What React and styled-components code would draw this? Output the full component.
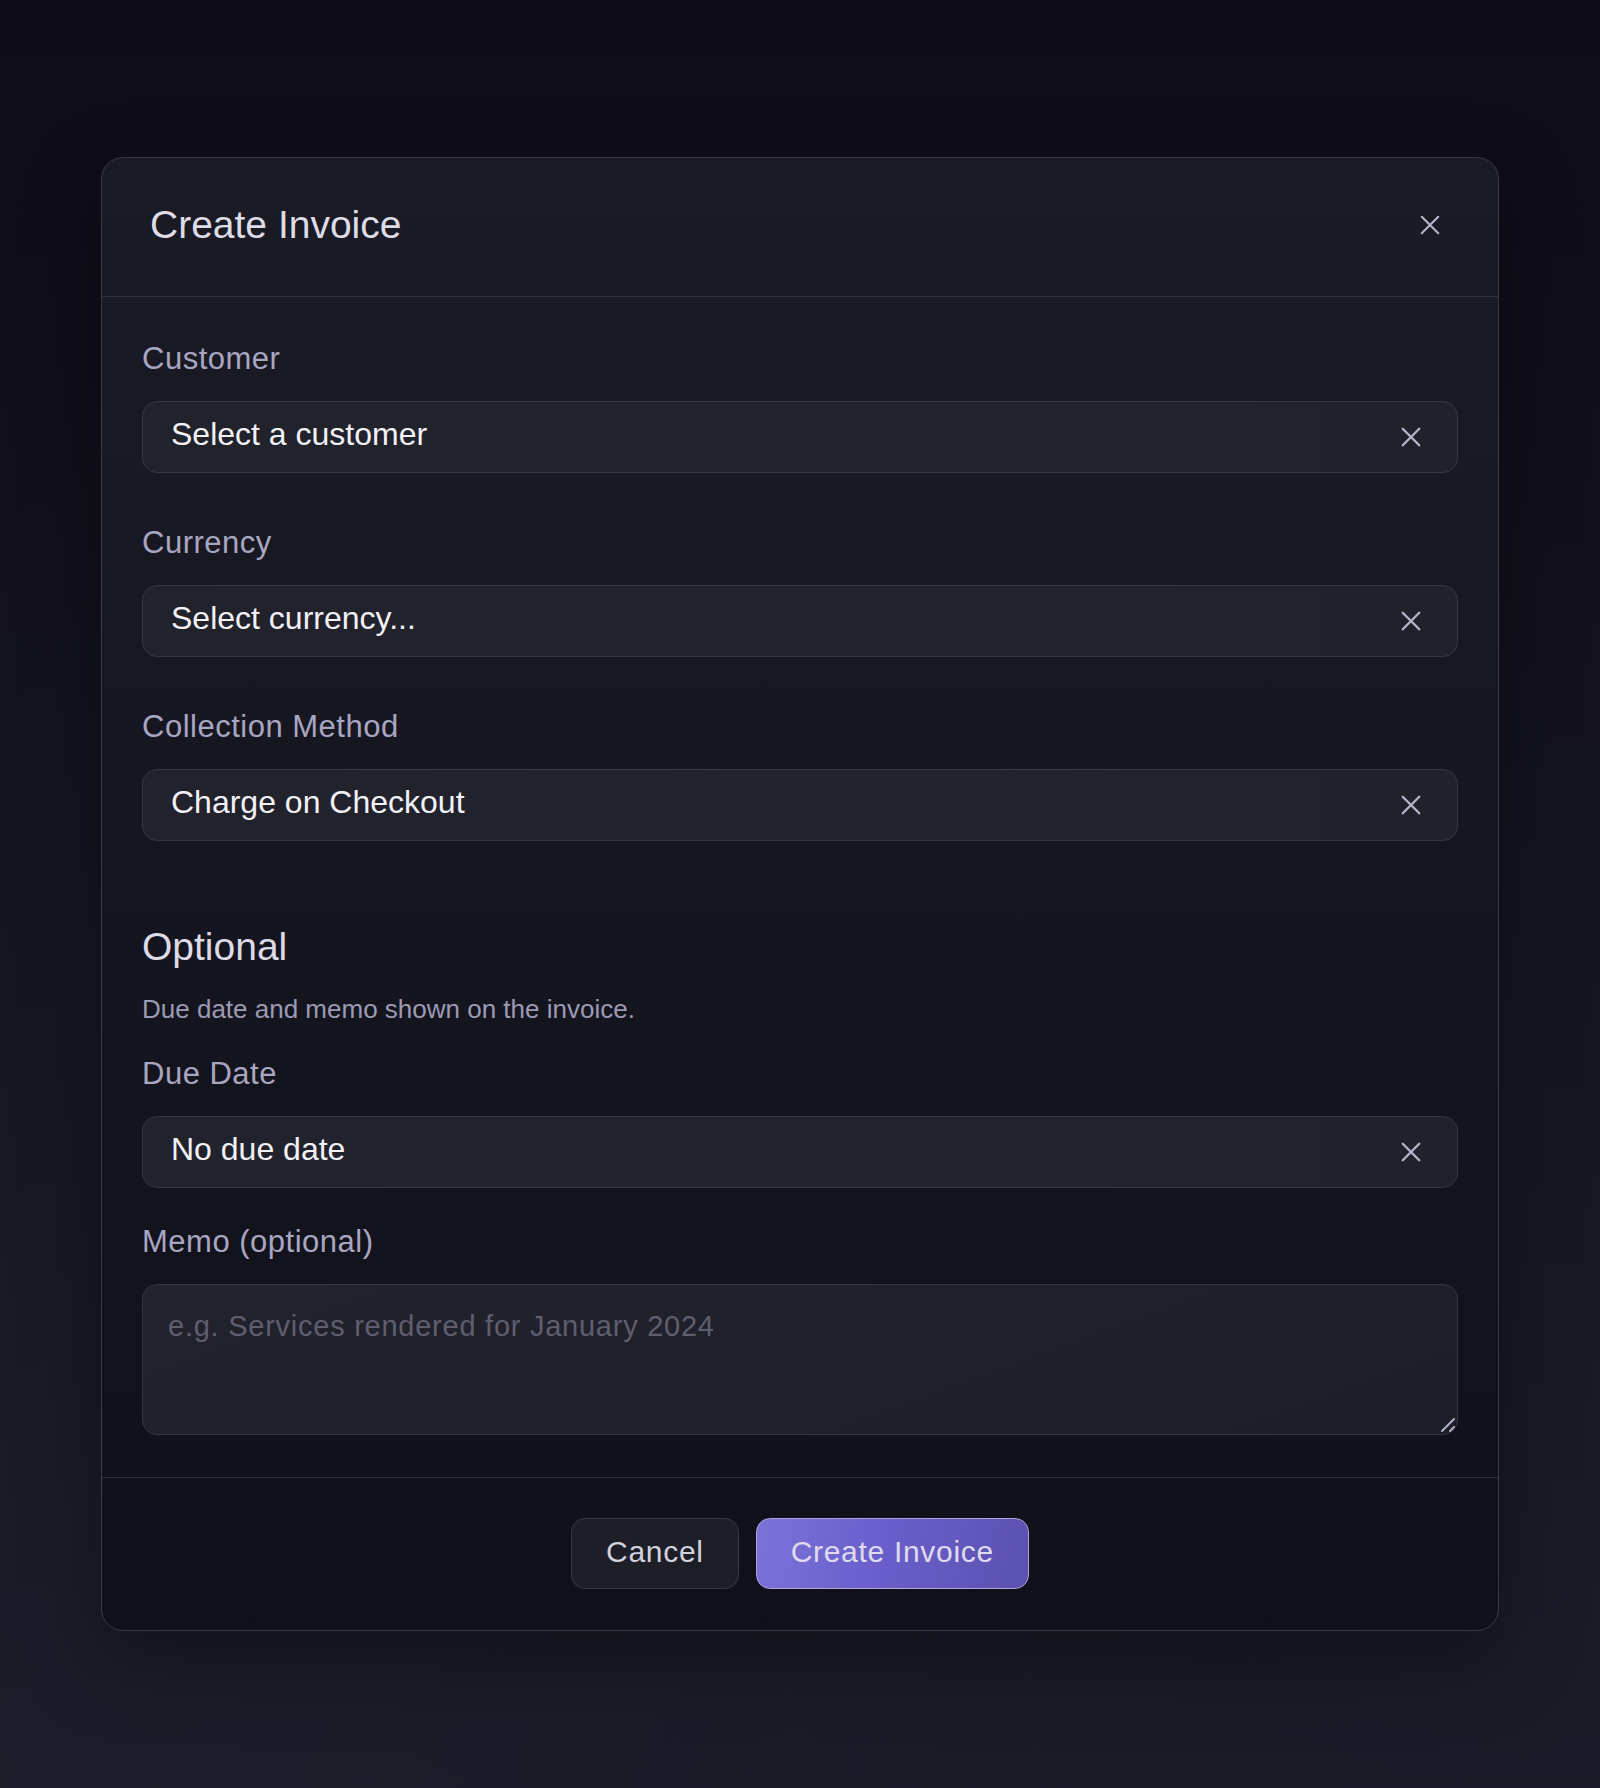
import styled, { createGlobalStyle } from "styled-components";

const GlobalStyle = createGlobalStyle`
  * {
    box-sizing: border-box;
  }
  body {
    margin: 0;
    font-family: "Liberation Sans", Arial, sans-serif;
    background: #0f0e19;
  }
`;

// --- Styled Components ---
const Page = styled.div`
  min-height: 100vh;
  display: flex;
  align-items: center;
  justify-content: center;
  background:
    radial-gradient(ellipse at 10% 100%, rgba(36, 38, 52, 0.35), transparent 55%),
    radial-gradient(ellipse at 95% 90%, rgba(32, 34, 48, 0.3), transparent 50%),
    linear-gradient(180deg, #0e0d18 0%, #12121d 45%, #181925 100%);
`;

const Modal = styled.div`
  width: 1398px;
  border: 1px solid #393945;
  border-radius: 22px;
  overflow: hidden;
  background: linear-gradient(180deg, #1b1b26 0%, #161620 45%, #10101a 100%);
  box-shadow: 0 30px 80px rgba(0, 0, 0, 0.35);
`;

const Header = styled.div`
  height: 139px;
  display: flex;
  align-items: center;
  justify-content: space-between;
  padding: 0 48px 4px;
  border-bottom: 1px solid #2e2e39;
`;

const Title = styled.h2`
  margin: 0;
  font-size: 39px;
  font-weight: 400;
  color: #dddce7;
`;

const IconButton = styled.button`
  width: ${(p) => p.$size}px;
  height: ${(p) => p.$size}px;
  display: flex;
  align-items: center;
  justify-content: center;
  padding: 0;
  border: none;
  background: transparent;
  color: #b6b4ca;
  cursor: pointer;
  flex-shrink: 0;
`;

const Body = styled.div`
  padding: 44px 40px 42px;
  display: flex;
  flex-direction: column;
`;

const Field = styled.div`
  display: flex;
  flex-direction: column;
  margin-top: ${(p) => p.$gap || 0}px;
`;

const Label = styled.label`
  font-size: 31px;
  line-height: 36px;
  letter-spacing: 0.5px;
  color: #a9a6c2;
  margin-bottom: 24px;
`;

const Select = styled.div`
  height: 72px;
  display: flex;
  align-items: center;
  justify-content: space-between;
  padding: 0 28px;
  border: 1px solid #363643;
  border-radius: 15px;
  background: linear-gradient(90deg, #22222d 0%, #23232e 60%, #21212c 100%);
`;

const SelectValue = styled.span`
  font-size: 32px;
  color: #f1f1f6;
  padding-bottom: 6px;
`;

const SectionTitle = styled.h3`
  margin: 83px 0 0;
  font-size: 39px;
  line-height: 46px;
  font-weight: 400;
  color: #dcdbe7;
`;

const SectionText = styled.p`
  margin: 24px 0 0;
  font-size: 26px;
  line-height: 30px;
  color: #9c9ab4;
`;

const MemoWrap = styled.div`
  position: relative;
  display: flex;
  flex-direction: column;
`;

const Memo = styled.textarea`
  height: 151px;
  resize: none;
  padding: 25px 25px;
  border: 1px solid #363643;
  border-radius: 15px;
  background: linear-gradient(160deg, #22222d 0%, #20202b 60%, #1d1d28 100%);
  font-family: "Liberation Sans", Arial, sans-serif;
  font-size: 29px;
  line-height: 33px;
  letter-spacing: 0.75px;
  color: #f1f1f6;
  outline: none;
  &::placeholder {
    color: #5f5e6f;
  }
`;

// resize handle in the textarea corner
const Grip = styled.svg`
  position: absolute;
  right: 3px;
  bottom: 3px;
  pointer-events: none;
  color: #b0adc8;
`;

const Footer = styled.div`
  border-top: 1px solid #2e2e39;
  padding: 40px 40px 41px;
  display: flex;
  justify-content: center;
  gap: 17px;
`;

const Button = styled.button`
  height: 71px;
  padding: 0 34px 3px;
  border-radius: 14px;
  font-family: "Liberation Sans", Arial, sans-serif;
  font-size: 30px;
  letter-spacing: 0.7px;
  cursor: pointer;
  border: 1px solid ${(p) => (p.$primary ? "#aaa4dc" : "#383845")};
  color: ${(p) => (p.$primary ? "#dedcec" : "#d2d1de")};
  background: ${(p) =>
    p.$primary
      ? "linear-gradient(100deg, #7c73d9 0%, #6a5fcb 45%, #5b51b0 100%)"
      : "#1e1e29"};
`;

const CloseIcon = ({ size = 22, stroke = 2.4 }) => (
  <svg width={size} height={size} viewBox="0 0 24 24" fill="none">
    <path
      d="M3 3L21 21M21 3L3 21"
      stroke="currentColor"
      strokeWidth={stroke}
      strokeLinecap="round"
    />
  </svg>
);

const SelectField = ({ label, value, gap }) => (
  <Field $gap={gap}>
    <Label>{label}</Label>
    <Select>
      <SelectValue>{value}</SelectValue>
      <IconButton $size={36}>
        <CloseIcon size={22} stroke={2.6} />
      </IconButton>
    </Select>
  </Field>
);

const App = () => {
  return (
    <>
      <GlobalStyle />
      <Page>
        <Modal>
          <Header>
            <Title>Create Invoice</Title>
            <IconButton $size={40}>
              <CloseIcon size={22} stroke={2.3} />
            </IconButton>
          </Header>

          <Body>
            <SelectField label="Customer" value="Select a customer" />
            <SelectField label="Currency" value="Select currency..." gap={52} />
            <SelectField
              label="Collection Method"
              value="Charge on Checkout"
              gap={52}
            />

            <SectionTitle>Optional</SectionTitle>
            <SectionText>Due date and memo shown on the invoice.</SectionText>

            <SelectField label="Due Date" value="No due date" gap={32} />

            <Field $gap={36}>
              <Label>Memo (optional)</Label>
              <MemoWrap>
                <Memo placeholder="e.g. Services rendered for January 2024" />
                <Grip width="14" height="14" viewBox="0 0 14 14" fill="none">
                  <path
                    d="M1 13L13 1M9 13L13 9"
                    stroke="currentColor"
                    strokeWidth="2"
                    strokeLinecap="round"
                  />
                </Grip>
              </MemoWrap>
            </Field>
          </Body>

          <Footer>
            <Button>Cancel</Button>
            <Button $primary>Create Invoice</Button>
          </Footer>
        </Modal>
      </Page>
    </>
  );
};

export default App;
